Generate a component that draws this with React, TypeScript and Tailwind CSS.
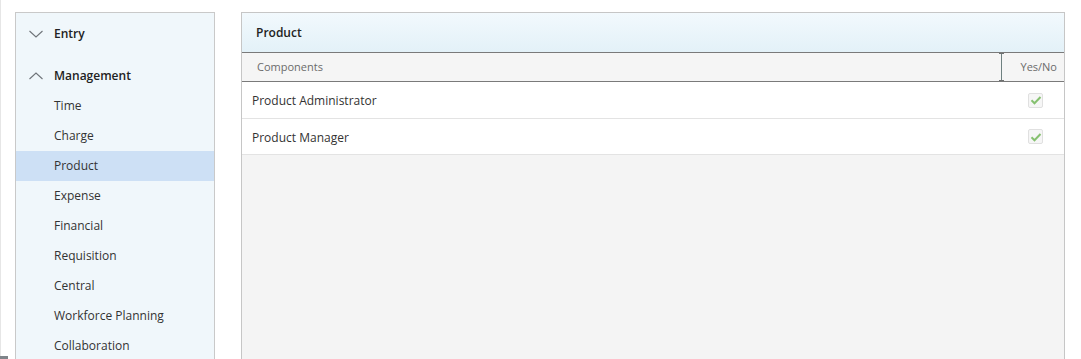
const subItems = [
  "Time",
  "Charge",
  "Product",
  "Expense",
  "Financial",
  "Requisition",
  "Central",
  "Workforce Planning",
  "Collaboration",
];

const rows = ["Product Administrator", "Product Manager"];

function Chevron({ up }: { up?: boolean }) {
  return (
    <svg width="16" height="10" viewBox="0 0 16 10" className="shrink-0">
      <path
        d={up ? "M1.5 8L8 2l6.5 6" : "M1.5 2L8 8l6.5-6"}
        fill="none"
        stroke="#6f7479"
        strokeWidth="1.1"
      />
    </svg>
  );
}

function Check() {
  return (
    <div className="w-[15px] h-[15px] bg-[#f6f6f6] border border-[#e0e0e0] rounded-[2px] flex items-center justify-center">
      <svg width="12" height="10" viewBox="0 0 12 10">
        <path d="M1.5 5.2l3 3L10.5 2" fill="none" stroke="#86c170" strokeWidth="2" />
      </svg>
    </div>
  );
}

export default function App() {
  return (
    <div
      className="relative w-[1081px] h-[359px] overflow-hidden bg-white text-[12px] text-[#333]"
      style={{ fontFamily: '"Open Sans", "Noto Sans", sans-serif' }}
    >
      {/* page edge marks */}
      <div className="absolute left-0 top-0 w-px h-full bg-[#e6e6e6]" />
      <div className="absolute left-0 bottom-0 w-[8px] h-[3px] bg-[#7e8489]" />

      <div className="flex pt-[12px] pl-[15px]">
        {/* Sidebar */}
        <div className="w-[200px] h-[400px] shrink-0 bg-[#f0f7fb] border border-[#c9c9c9]">
          <div className="h-[41px] flex items-center pl-[12px] gap-[10px]">
            <Chevron />
            <span className="font-semibold text-[#222]">Entry</span>
          </div>
          <div className="h-[37px] flex items-end pb-[6px] pl-[12px] gap-[10px]">
            <div className="mb-[4px]">
              <Chevron up />
            </div>
            <span className="font-semibold text-[#222]">Management</span>
          </div>
          {subItems.map((s) => (
            <div
              key={s}
              className={`h-[30px] flex items-center pl-[38px] text-[#333] ${
                s === "Product" ? "bg-[#cde0f5]" : ""
              }`}
            >
              {s}
            </div>
          ))}
        </div>

        {/* Main panel */}
        <div className="ml-[26px] w-[824px] h-[400px] shrink-0 border border-[#c6c6c6] bg-[#f4f4f4] flex flex-col">
          <div className="h-[40px] flex items-center pl-[14px] border-b border-[#7a7a7a] bg-gradient-to-b from-[#f2f9fd] to-[#e3f1f8]">
            <span className="font-semibold text-[#222]">Product</span>
          </div>
          <div className="relative h-[29px] flex items-center border-b border-[#7a7a7a] bg-[#f5f5f5] text-[11px] text-[#6b6b6b]">
            <div className="w-[760px] pl-[15px]">Components</div>
            <div className="flex-1 text-right pr-[7px]">Yes/No</div>
            <div className="absolute left-[759px] top-0 h-full w-px bg-[#6e8080]" />
            <div className="absolute left-[757px] top-0 w-[5px] h-px bg-[#6e7070]" />
            <div className="absolute left-[757px] bottom-0 w-[5px] h-px bg-[#6e7070]" />
          </div>
          {rows.map((r) => (
            <div
              key={r}
              className="h-[37px] flex items-center bg-white border-b border-[#e3e3e3] last:h-[36px]"
            >
              <div className="flex-1 pl-[10px] pt-[2px]">{r}</div>
              <div className="pr-[21px]">
                <Check />
              </div>
            </div>
          ))}
        </div>
      </div>
    </div>
  );
}
